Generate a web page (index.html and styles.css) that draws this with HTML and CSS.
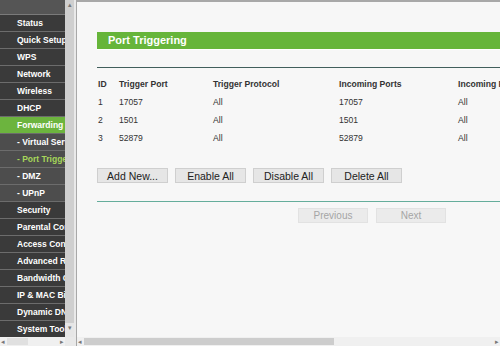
FILE: index.html
```html
<!DOCTYPE html>
<html lang="en">
<head>
    <meta charset="UTF-8">
    <title>Port Triggering</title>
    <link rel="stylesheet" href="styles.css">
</head>
<body>
    <div class="leftFrame">
        <div class="menuWrap">
            <div class="menuTop"></div>
            <div class="menu">
                <div class="item">Status</div>
                <div class="item">Quick Setup</div>
                <div class="item">WPS</div>
                <div class="item">Network</div>
                <div class="item">Wireless</div>
                <div class="item">DHCP</div>
                <div class="item active">Forwarding</div>
                <div class="item sub">- Virtual Servers</div>
                <div class="item sub current">- Port Triggering</div>
                <div class="item sub">- DMZ</div>
                <div class="item sub">- UPnP</div>
                <div class="item">Security</div>
                <div class="item">Parental Control</div>
                <div class="item">Access Control</div>
                <div class="item">Advanced Routing</div>
                <div class="item">Bandwidth Control</div>
                <div class="item">IP &amp; MAC Binding</div>
                <div class="item">Dynamic DNS</div>
                <div class="item">System Tools</div>
            </div>
        </div>
        <div class="vScroll">
            <span class="arrow">&#9652;</span>
            <span class="arrow down">&#9662;</span>
        </div>
        <div class="hScroll small">
            <span class="arrow">&#9666;</span>
            <span class="thumb left"></span>
            <span class="arrow">&#9656;</span>
        </div>
        <div class="corner"></div>
    </div>

    <div class="mainFrame">
        <div class="content">
            <div class="title">Port Triggering</div>
            <hr class="line dark">
            <div class="grid head">
                <span>ID</span>
                <span>Trigger Port</span>
                <span>Trigger Protocol</span>
                <span>Incoming Ports</span>
                <span>Incoming Protocol</span>
            </div>
            <div class="grid">
                <span>1</span><span>17057</span><span>All</span><span>17057</span><span>All</span>
            </div>
            <div class="grid">
                <span>2</span><span>1501</span><span>All</span><span>1501</span><span>All</span>
            </div>
            <div class="grid">
                <span>3</span><span>52879</span><span>All</span><span>52879</span><span>All</span>
            </div>
            <div class="buttons">
                <button>Add New...</button>
                <button>Enable All</button>
                <button>Disable All</button>
                <button>Delete All</button>
            </div>
            <hr class="line green">
            <div class="pager">
                <button disabled>Previous</button>
                <button disabled>Next</button>
            </div>
        </div>
        <div class="hScroll">
            <span class="arrow">&#9666;</span>
            <span class="thumb main"></span>
            <span class="arrow">&#9656;</span>
        </div>
    </div>
</body>
</html>
```

FILE: styles.css
```css
body {
    margin: 0;
    width: 500px;
    height: 346px;
    display: flex;
    overflow: hidden;
    font-family: "Liberation Sans", Arial, sans-serif;
    background-color: #f7f7f7;
}

/* left menu frame */
.leftFrame {
    width: 76px;
    height: 346px;
    display: grid;
    grid-template-columns: 65px 9px;
    grid-template-rows: 337px 9px;
    background-color: #e9e9e9;
    padding-right: 2px;
    box-sizing: border-box;
}
.menuWrap {
    overflow: hidden;
    background-color: #3a3a3a;
}
.menuTop {
    height: 14px;
    background-color: #555;
    border-bottom: 1px solid #7a7a7a;
}
.item {
    height: 16px;
    line-height: 16px;
    border-bottom: 1px solid #6c6c6c;
    padding-left: 17px;
    white-space: nowrap;
    color: white;
    font-size: 8.5px;
    font-weight: bold;
    background-color: #3a3a3a;
}
.item.active {
    background-color: #6cb43e;
}
.item.sub {
    background-color: #4d4d4d;
}
.item.current {
    color: #a6d65a;
}
.vScroll {
    background-color: #cfcfcf;
    display: flex;
    flex-direction: column;
    justify-content: space-between;
    align-items: center;
}
.vScroll .down {
    background-color: #e6e6e6;
    width: 9px;
    height: 14px;
    text-align: center;
}
.arrow {
    font-size: 7px;
    line-height: 9px;
    color: #777;
}
.hScroll {
    height: 9px;
    display: flex;
    align-items: center;
    background-color: #f0f0f0;
    gap: 1px;
}
.hScroll.small {
    grid-column: 1;
}
.hScroll .arrow {
    width: 6px;
    text-align: center;
}
.thumb {
    height: 7px;
    background-color: #cdcdcd;
}
.thumb.left {
    flex: 1;
    margin-right: 30px;
    background-color: #e0e0e0;
}
.thumb.main {
    width: 250px;
    margin-right: auto;
}
.corner {
    background-color: #e9e9e9;
}

/* main frame */
.mainFrame {
    flex: 1;
    display: flex;
    flex-direction: column;
    border-left: 1px solid #a8a8a8;
    border-top: 2px solid #a8a8a8;
    min-width: 0;
}
.content {
    flex: 1;
    overflow: hidden;
    padding: 30px 0 0 20px;
    width: 520px;
    color: #333;
}
.title {
    height: 17px;
    line-height: 17px;
    background-color: #66b53a;
    color: white;
    font-size: 11px;
    font-weight: bold;
    padding-left: 11px;
    border-bottom: 1px solid #fff;
}
.line {
    border: none;
    margin: 0;
    height: 1px;
}
.line.dark {
    margin-top: 17px;
    background-color: #415f5c;
}
.line.green {
    margin-top: 18px;
    background-color: #65ad9b;
}
.grid {
    display: grid;
    grid-template-columns: 21px 94px 126px 119px 100px;
    font-size: 8.6px;
    height: 18px;
    line-height: 18px;
    padding-left: 1px;
}
.grid.head {
    margin-top: 7px;
    font-weight: bold;
    color: #333;
}
.buttons {
    display: flex;
    gap: 7px;
    margin-top: 21px;
}
button {
    width: 71px;
    height: 15px;
    padding: 0;
    font-family: "Liberation Sans", Arial, sans-serif;
    font-size: 10.5px;
    color: #222;
    background-color: #e6e6e6;
    border: 1px solid #cfcfcf;
    border-radius: 0;
}
.pager {
    display: flex;
    gap: 8px;
    margin: 6px 0 0 201px;
}
.pager button {
    width: 70px;
    font-size: 10px;
    color: #a5a5a5;
    background-color: #ebebeb;
    border-color: #e2e2e2;
}
```
